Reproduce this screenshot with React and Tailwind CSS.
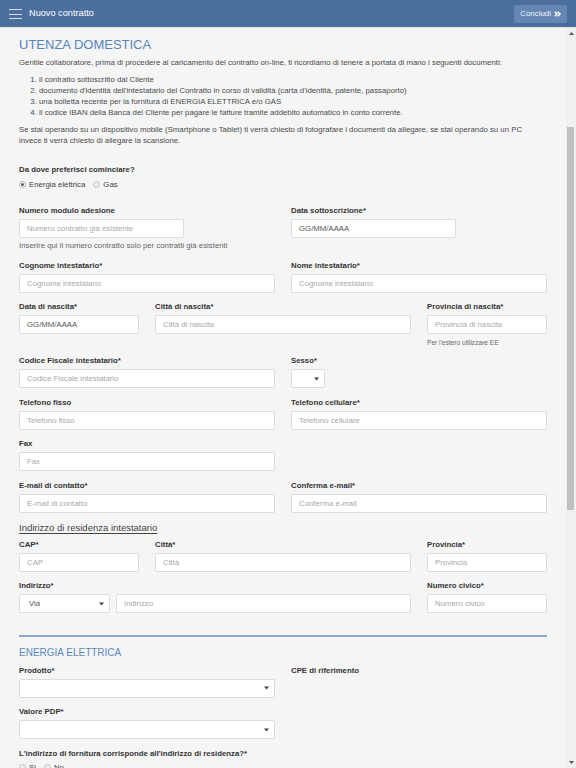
import React from "react";

const FONT = { fontFamily: '"Liberation Sans", Arial, Helvetica, sans-serif' };

function Label({ children }) {
  return (
    <div className="text-[7.8px] leading-[11px] font-bold text-[#333] mb-[3px] whitespace-nowrap">
      {children}
    </div>
  );
}

function Field({ placeholder, value, className = "w-full" }) {
  return (
    <input
      readOnly
      placeholder={placeholder}
      defaultValue={value}
      className={
        "block h-[19px] bg-white border border-[#dcdcdc] rounded-[2px] px-[7px] text-[7.8px] text-[#555] placeholder:text-[#a8a8a8] outline-none " +
        className
      }
    />
  );
}

function Caret() {
  return (
    <svg width="5" height="4" viewBox="0 0 5 4" className="shrink-0">
      <path d="M0 0.5 L5 0.5 L2.5 3.5 Z" fill="#444" />
    </svg>
  );
}

function SelectBox({ value = "", className = "w-full" }) {
  return (
    <div
      className={
        "h-[19px] bg-white border border-[#dcdcdc] rounded-[2px] flex items-center justify-between pl-[9px] pr-[5px] text-[7.8px] text-[#555] " +
        className
      }
    >
      <span>{value}</span>
      <Caret />
    </div>
  );
}

function Radio({ checked, label }) {
  return (
    <span className="inline-flex items-center gap-[3px] text-[7.8px] text-[#444]">
      <span
        className={
          "w-[7px] h-[7px] rounded-full border flex items-center justify-center " +
          (checked ? "border-[#a9a9a9] bg-white" : "border-[#c4c4c4] bg-[#ececec]")
        }
      >
        {checked && <span className="w-[3px] h-[3px] rounded-full bg-[#5a5a5a]" />}
      </span>
      {label}
    </span>
  );
}

function Row({ children, className = "mb-[8.5px]" }) {
  return <div className={"grid grid-cols-12 gap-x-4 " + className}>{children}</div>;
}

function Help({ children }) {
  return <div className="text-[7.8px] leading-[11px] text-[#666] mt-[2px]">{children}</div>;
}

function Hamburger() {
  return (
    <div className="flex flex-col gap-[3.5px] w-[13px]">
      <span className="block h-px bg-[#d3dcea]" />
      <span className="block h-px bg-[#d3dcea]" />
      <span className="block h-px bg-[#d3dcea]" />
    </div>
  );
}

function DoubleChevron() {
  return (
    <svg width="7" height="6" viewBox="0 0 7 6" fill="none" stroke="#fff" strokeWidth="1.5">
      <path d="M0.8 0.8 L3 3 L0.8 5.2" />
      <path d="M3.8 0.8 L6 3 L3.8 5.2" />
    </svg>
  );
}

function Scrollbar() {
  return (
    <div className="w-[10px] bg-[#f0f0f0] flex flex-col shrink-0">
      <div className="h-[11px] flex items-center justify-center">
        <svg width="5" height="3" viewBox="0 0 5 3">
          <path d="M0 3 L5 3 L2.5 0 Z" fill="#5a5a5a" />
        </svg>
      </div>
      <div className="h-[88px]" />
      <div className="h-[383px] w-[7px] ml-px bg-[#c1c1c1]" />
      <div className="flex-1" />
      <div className="h-[12px] flex items-center justify-center">
        <svg width="5" height="3" viewBox="0 0 5 3">
          <path d="M0 0 L5 0 L2.5 3 Z" fill="#5a5a5a" />
        </svg>
      </div>
    </div>
  );
}

export default function App() {
  return (
    <div className="h-screen w-full flex flex-col overflow-hidden bg-[#f5f5f5]" style={FONT}>
      {/* top bar */}
      <header className="h-[27px] shrink-0 bg-[#4a6e9d] flex items-center pl-[9px] pr-[9px] pt-px">
        <Hamburger />
        <span className="ml-[7px] text-[9.2px] text-white">Nuovo contratto</span>
        <div className="flex-1" />
        <button className="h-[18px] px-[6px] rounded-[2px] bg-[#6687b4] text-[#f0f4fa] text-[7.9px] flex items-center gap-[3px]">
          Concludi
          <DoubleChevron />
        </button>
      </header>

      <div className="flex-1 flex min-h-0 border-t border-[#e4e4e4]">
        <main className="flex-1 overflow-hidden px-[19px] pt-[9px] text-[#4a4a4a]">
          <h1 className="text-[13px] leading-[15px] text-[#5585bd] mb-[5px]">UTENZA DOMESTICA</h1>

          <p className="text-[7.8px] leading-[11px] mb-[5.5px]">
            Gentile collaboratore, prima di procedere al caricamento del contratto on-line, ti ricordiamo di tenere a portata di mano i seguenti documenti:
          </p>
          <ol className="list-decimal pl-[20px] text-[7.8px] leading-[11px] mb-[6.5px]">
            <li>il contratto sottoscritto dal Cliente</li>
            <li>documento d'identità dell'intestatario del Contratto in corso di validità (carta d'identità, patente, passaporto)</li>
            <li>una bolletta recente per la fornitura di ENERGIA ELETTRICA e/o GAS</li>
            <li>il codice IBAN della Banca del Cliente per pagare le fatture tramite addebito automatico in conto corrente.</li>
          </ol>
          <p className="text-[7.8px] leading-[11px] mb-[18px] pr-[10px]">
            Se stai operando su un dispositivo mobile (Smartphone o Tablet) ti verrà chiesto di fotografare i documenti da allegare, se stai operando su un PC invece ti verrà chiesto di allegare la scansione.
          </p>

          <div className="mb-[14.5px]">
            <div className="text-[7.8px] leading-[11px] font-bold text-[#333] mb-[4px]">Da dove preferisci cominciare?</div>
            <div className="flex items-center gap-[8px]">
              <Radio checked label="Energia elettrica" />
              <Radio label="Gas" />
            </div>
          </div>

          <Row className="mb-[8.5px]">
            <div className="col-span-6">
              <Label>Numero modulo adesione</Label>
              <Field placeholder="Numero contratto già esistente" className="w-[165px]" />
              <Help>Inserire qui il numero contratto solo per contratti già esistenti</Help>
            </div>
            <div className="col-span-6">
              <Label>Data sottoscrizione*</Label>
              <Field value="GG/MM/AAAA" className="w-[165px]" />
            </div>
          </Row>

          <Row>
            <div className="col-span-6">
              <Label>Cognome intestatario*</Label>
              <Field placeholder="Cognome intestatario" />
            </div>
            <div className="col-span-6">
              <Label>Nome intestatario*</Label>
              <Field placeholder="Cognome intestatario" />
            </div>
          </Row>

          <Row className="mb-[8.5px]">
            <div className="col-span-3">
              <Label>Data di nascita*</Label>
              <Field value="GG/MM/AAAA" />
            </div>
            <div className="col-span-6">
              <Label>Città di nascita*</Label>
              <Field placeholder="Città di nascita" />
            </div>
            <div className="col-span-3">
              <Label>Provincia di nascita*</Label>
              <Field placeholder="Provincia di nascita" />
              <div className="text-[6.6px] leading-[9px] text-[#666] mt-[3.5px]">Per l'estero utilizzare EE</div>
            </div>
          </Row>

          <Row>
            <div className="col-span-6">
              <Label>Codice Fiscale intestatario*</Label>
              <Field placeholder="Codice Fiscale intestatario" />
            </div>
            <div className="col-span-6">
              <Label>Sesso*</Label>
              <SelectBox className="w-[34px]" />
            </div>
          </Row>

          <Row>
            <div className="col-span-6">
              <Label>Telefono fisso</Label>
              <Field placeholder="Telefono fisso" />
            </div>
            <div className="col-span-6">
              <Label>Telefono cellulare*</Label>
              <Field placeholder="Telefono cellulare" />
            </div>
          </Row>

          <Row>
            <div className="col-span-6">
              <Label>Fax</Label>
              <Field placeholder="Fax" />
            </div>
          </Row>

          <Row>
            <div className="col-span-6">
              <Label>E-mail di contatto*</Label>
              <Field placeholder="E-mail di contatto" />
            </div>
            <div className="col-span-6">
              <Label>Conferma e-mail*</Label>
              <Field placeholder="Conferma e-mail" />
            </div>
          </Row>

          <div className="text-[9.5px] leading-[13px] text-[#444] underline underline-offset-[1.5px] mb-[4.5px]">
            Indirizzo di residenza intestatario
          </div>

          <Row>
            <div className="col-span-3">
              <Label>CAP*</Label>
              <Field placeholder="CAP" />
            </div>
            <div className="col-span-6">
              <Label>Città*</Label>
              <Field placeholder="Città" />
            </div>
            <div className="col-span-3">
              <Label>Provincia*</Label>
              <Field placeholder="Provincia" />
            </div>
          </Row>

          <Row className="mb-[21.5px]">
            <div className="col-span-9">
              <Label>Indirizzo*</Label>
              <div className="flex gap-[6px]">
                <SelectBox value="Via" className="w-[91px] shrink-0" />
                <Field placeholder="Indirizzo" className="flex-1 min-w-0" />
              </div>
            </div>
            <div className="col-span-3">
              <Label>Numero civico*</Label>
              <Field placeholder="Numero civico" />
            </div>
          </Row>

          <div className="h-[2px] bg-[#88a9d1] mb-[9.5px]" />

          <div className="text-[10px] leading-[13px] text-[#5a88bf] mb-[5.5px]">ENERGIA ELETTRICA</div>

          <Row>
            <div className="col-span-6">
              <Label>Prodotto*</Label>
              <SelectBox />
            </div>
            <div className="col-span-6">
              <Label>CPE di riferimento</Label>
            </div>
          </Row>

          <Row>
            <div className="col-span-6">
              <Label>Valore PDP*</Label>
              <SelectBox />
            </div>
          </Row>

          <div>
            <Label>L'indirizzo di fornitura corrisponde all'indirizzo di residenza?*</Label>
            <div className="flex items-center gap-[8px] mt-[1px]">
              <Radio label="Si" />
              <Radio label="No" />
            </div>
          </div>
        </main>
        <Scrollbar />
      </div>
    </div>
  );
}
